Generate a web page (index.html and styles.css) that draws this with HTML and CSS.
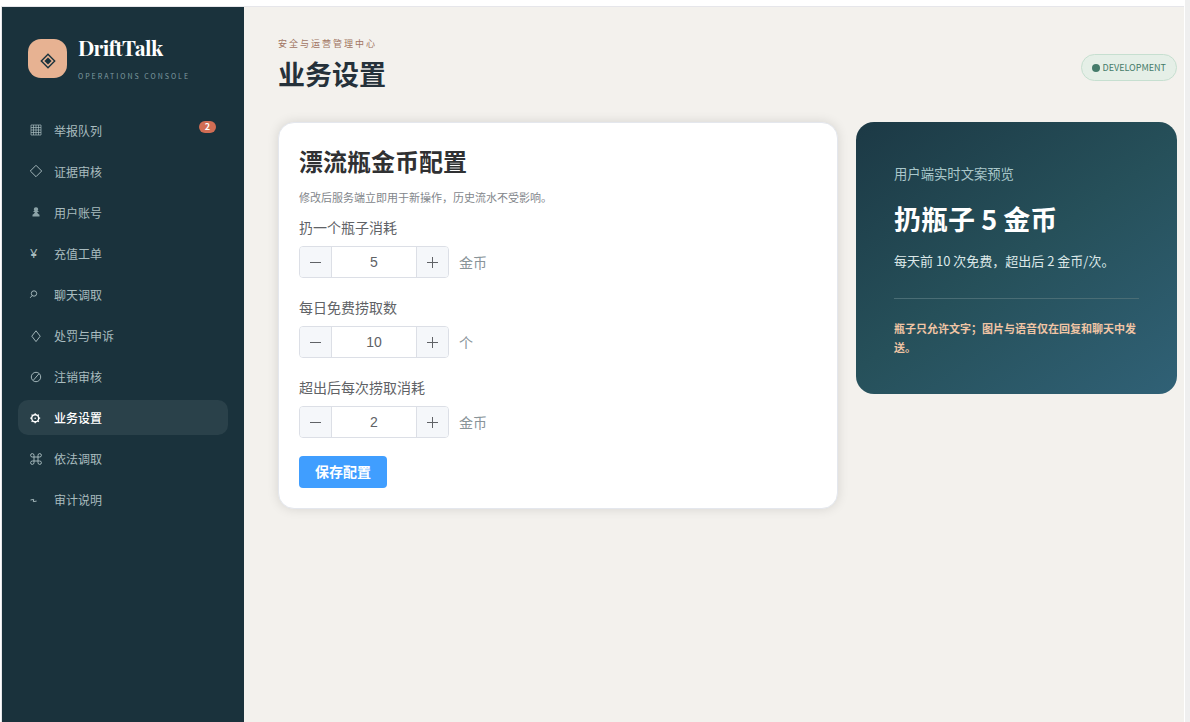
FILE: index.html
```html
<!DOCTYPE html>
<html lang="zh-CN">
<head>
    <meta charset="UTF-8">
    <meta name="viewport" content="width=device-width, initial-scale=1.0">
    <title>DriftTalk - 业务设置</title>
    <link rel="stylesheet" href="styles.css">
</head>
<body>
    <div class="app">
        <aside class="sidebar">
            <div class="brand">
                <div class="brand-mark">
                    <svg width="16" height="16" viewBox="0 0 16 16"><path d="M8 1.3L14.7 8L8 14.7L1.3 8Z" fill="none" stroke="currentColor" stroke-width="1.4"/><path d="M8 4.4L11.6 8L8 11.6L4.4 8Z" fill="currentColor"/></svg>
                </div>
                <div class="brand-text">
                    <strong>DriftTalk</strong>
                    <small>OPERATIONS CONSOLE</small>
                </div>
            </div>
            <nav class="nav">
                <a class="nav-item"><svg class="icon grid-icon" viewBox="0 0 12 12"><path d="M1 1h10v10H1zM3.5 1v10M6 1v10M8.5 1v10M1 3.500h10M1 6h10M1 8.500h10"/></svg><span>举报队列</span><b class="badge">2</b></a>
                <a class="nav-item"><svg class="icon" viewBox="0 0 12 12"><path d="M6 .3L11.7 6L6 11.7L.3 6Z"/></svg><span>证据审核</span></a>
                <a class="nav-item"><svg class="icon solid" viewBox="0 0 12 12"><path d="M6 1.2a2.2 2.2 0 0 1 1.500 3.800h1v1.100H7.200c.1 1 .5 1.500 2.300 2.700v1.700h-7V8.800c1.800-1.200 2.200-1.700 2.300-2.700H3.500V5h1A2.200 2.200 0 0 1 6 1.200Z"/></svg><span>用户账号</span></a>
                <a class="nav-item"><i>¥</i><span>充值工单</span></a>
                <a class="nav-item"><svg class="icon" viewBox="0 0 12 12"><circle cx="4" cy="5.500" r="2.700"/><path d="M2.200 7.500L.2 9.800"/></svg><span>聊天调取</span></a>
                <a class="nav-item"><svg class="icon" viewBox="0 0 12 12"><path d="M6 .8L10.200 6.200L6 11.600L1.800 6.200Z"/></svg><span>处罚与申诉</span></a>
                <a class="nav-item"><svg class="icon" viewBox="0 0 12 12"><circle cx="6" cy="6" r="4.700"/><path d="M3.300 9.300L8.900 2.800"/></svg><span>注销审核</span></a>
                <a class="nav-item active"><svg class="icon" viewBox="0 0 12 12"><circle cx="5.200" cy="6.200" r="3.500" stroke-width="1.400"/><circle cx="5.200" cy="6.200" r=".8" fill="currentColor" stroke="none"/><path d="M5.200 1.200V3M5.200 9.400v1.800M.2 6.200H2M8.400 6.200h1.800M1.600 2.600l1.200 1.200M7.600 8.600l1.200 1.200M1.600 9.800l1.200-1.200M7.600 3.800l1.200-1.200" stroke-width="1.300"/></svg><span>业务设置</span></a>
                <a class="nav-item"><svg class="icon" viewBox="0 0 12 12"><path d="M4 4H2.300A1.700 1.700 0 1 1 4 2.300V9.700A1.700 1.700 0 1 1 2.300 8H9.700A1.700 1.700 0 1 1 8 9.700V2.300A1.700 1.700 0 1 1 9.700 4Z"/></svg><span>依法调取</span></a>
                <a class="nav-item"><svg class="icon" viewBox="0 0 12 12"><path d="M.5 6L3.700 5.400L3.300 7.600L6.600 7.100"/></svg><span>审计说明</span></a>
            </nav>
        </aside>

        <main class="main">
            <header class="topbar">
                <div>
                    <p class="eyebrow">安全与运营管理中心</p>
                    <h1>业务设置</h1>
                </div>
                <div class="env"><span class="env-dot"></span>DEVELOPMENT</div>
            </header>

            <div class="settings">
                <section class="card">
                    <h2>漂流瓶金币配置</h2>
                    <p class="desc">修改后服务端立即用于新操作，历史流水不受影响。</p>
                    <div class="field">
                        <label>扔一个瓶子消耗</label>
                        <div class="field-row">
                            <div class="stepper">
                                <button class="minus"></button>
                                <span class="value">5</span>
                                <button class="plus"></button>
                            </div>
                            <span class="unit">金币</span>
                        </div>
                    </div>
                    <div class="field">
                        <label>每日免费捞取数</label>
                        <div class="field-row">
                            <div class="stepper">
                                <button class="minus"></button>
                                <span class="value">10</span>
                                <button class="plus"></button>
                            </div>
                            <span class="unit">个</span>
                        </div>
                    </div>
                    <div class="field">
                        <label>超出后每次捞取消耗</label>
                        <div class="field-row">
                            <div class="stepper">
                                <button class="minus"></button>
                                <span class="value">2</span>
                                <button class="plus"></button>
                            </div>
                            <span class="unit">金币</span>
                        </div>
                    </div>
                    <button class="save">保存配置</button>
                </section>

                <section class="preview">
                    <span class="preview-label">用户端实时文案预览</span>
                    <h2>扔瓶子 5 金币</h2>
                    <p>每天前 10 次免费，超出后 2 金币/次。</p>
                    <hr>
                    <b class="tip">瓶子只允许文字；图片与语音仅在回复和聊天中发送。</b>
                </section>
            </div>
        </main>
    </div>
</body>
</html>
```
FILE: styles.css
```css
* {
    box-sizing: border-box;
}
body {
    margin: 0;
    height: 722px;
    padding: 6px 5px 0 1px;
    background: linear-gradient(to right, #fff 1185px, #efefef 1185px);
    font-family: "Noto Sans CJK SC", "Noto Sans", sans-serif;
    color: #25313a;
    overflow: hidden;
}
h1, h2, p {
    margin: 0;
}
.app {
    display: grid;
    grid-template-columns: 242px 1fr;
    height: 716px;
    border: solid #e6e6ea;
    border-width: 1px 0 0 1px;
    margin-right: 1px;
}

/* sidebar */
.sidebar {
    background: #1a323c;
    padding: 32px 16px 0;
}
.brand {
    display: flex;
    gap: 11px;
    padding-left: 10px;
    height: 73px;
}
.brand-mark {
    display: flex;
    align-items: center;
    justify-content: center;
    width: 39px;
    height: 39px;
    padding-top: 5px;
    border-radius: 13px;
    background: #e7b292;
    color: #1a323c;
}
.brand-text strong {
    display: block;
    font-family: "Playfair Display", "Liberation Serif", serif;
    font-size: 21px;
    line-height: 16px;
    letter-spacing: -.7px;
    color: #fff;
}
.brand-text small {
    display: block;
    margin-top: 15px;
    font-size: 7px;
    line-height: 12px;
    letter-spacing: 2px;
    color: #7f9ba0;
}
.nav {
    display: flex;
    flex-direction: column;
    gap: 6px;
}
.nav-item {
    display: flex;
    align-items: center;
    height: 35.1px;
    padding: 1px 12px 0;
    border-radius: 10px;
    font-size: 12px;
    color: #a9bcbf;
}
.nav-item i {
    width: 24px;
    font-size: 13px;
    font-style: normal;
    line-height: 16px;
    font-family: "Noto Sans", sans-serif;
}
.icon {
    width: 12px;
    height: 12px;
    margin-right: 12px;
    fill: none;
    stroke: currentColor;
    stroke-width: .95;
    overflow: visible;
}
.icon.solid {
    fill: #8ca3a8;
    stroke: none;
}
.grid-icon {
    stroke-width: .7;
}
.nav-item.active {
    background: #2a414a;
    color: #fff;
    font-weight: 500;
}
.badge {
    align-self: flex-start;
    width: 17px;
    height: 12px;
    margin: 8px 0 0 auto;
    border-radius: 6px;
    background: #d16d54;
    color: #fff;
    font-size: 9px;
    line-height: 12px;
    text-align: center;
}

/* main */
.main {
    background: #f3f1ed;
    padding: 30px 7px 0 34px;
}
.topbar {
    display: flex;
    justify-content: space-between;
    height: 85px;
}
.eyebrow {
    font-size: 9px;
    line-height: 14px;
    letter-spacing: 2px;
    color: #a17562;
}
h1 {
    font-size: 27px;
    line-height: 40px;
    margin-top: 3px;
}
.env {
    display: flex;
    align-items: center;
    gap: 3px;
    height: 27px;
    margin-top: 17px;
    padding: 0 10px;
    border: 1px solid #c6dfd0;
    border-radius: 14px;
    background: #e5efe7;
    font-size: 9px;
    color: #457b6a;
}
.env-dot {
    width: 8px;
    height: 8px;
    border-radius: 50%;
    background: #457b6a;
}
.settings {
    display: grid;
    grid-template-columns: 1fr 321px;
    gap: 18px;
    align-items: start;
}
.card {
    height: 387px;
    padding: 20px;
    border: 1px solid #e4e7ed;
    border-radius: 16px;
    background: #fff;
    box-shadow: 0 0 12px rgba(0, 0, 0, .12);
}
.card h2 {
    font-size: 24px;
    line-height: 36px;
    color: #303133;
}
.desc {
    margin: 9px 0 10px;
    font-size: 11px;
    line-height: 18px;
    color: #82868b;
}
.field {
    margin-bottom: 18px;
}
.field label {
    display: block;
    height: 22px;
    margin-bottom: 8px;
    font-size: 14px;
    line-height: 22px;
    color: #606266;
}
.field-row {
    display: flex;
    align-items: center;
    gap: 10px;
}
.stepper {
    display: flex;
    width: 150px;
    height: 32px;
    border: 1px solid #dcdfe6;
    border-radius: 4px;
    overflow: hidden;
}
.stepper button {
    width: 31px;
    padding: 0;
    border: 0;
    background: linear-gradient(#606266, #606266) center / 11px 1px no-repeat #f5f7fa;
}
.stepper .plus {
    background: linear-gradient(#606266, #606266) center / 11px 1px no-repeat,
        linear-gradient(#606266, #606266) center / 1px 11px no-repeat #f5f7fa;
}
.value {
    flex: 1;
    border: solid #dcdfe6;
    border-width: 0 1px;
    font-family: "Liberation Sans", Arial, sans-serif;
    font-size: 14px;
    line-height: 30px;
    text-align: center;
    color: #606266;
}
.unit {
    font-size: 14px;
    line-height: 32px;
    color: #899499;
}
.save {
    display: block;
    width: 88px;
    height: 32px;
    padding: 0 0 2px;
    border: 0;
    border-radius: 4px;
    background: #409eff;
    color: #fff;
    font: bold 14px "Noto Sans CJK SC", sans-serif;
}
.preview {
    height: 272px;
    padding: 41px 38px 0;
    border-radius: 18px;
    background: linear-gradient(145deg, #1c3945, #26505a 50%, #306176);
    color: #dce8e8;
}
.preview-label {
    display: block;
    font-size: 13.33px;
    line-height: 22px;
    color: #a9c7ca;
}
.preview h2 {
    margin-top: 14px;
    font-size: 27px;
    line-height: 40px;
    color: #fff;
}
.preview p {
    margin-top: 12px;
    font-size: 13px;
    line-height: 20px;
}
.preview hr {
    height: 1px;
    margin: 27px 0 20px;
    border: 0;
    background: #4a6d75;
}
.tip {
    display: block;
    font-size: 11px;
    line-height: 19px;
    color: #f0c5a5;
}
```
